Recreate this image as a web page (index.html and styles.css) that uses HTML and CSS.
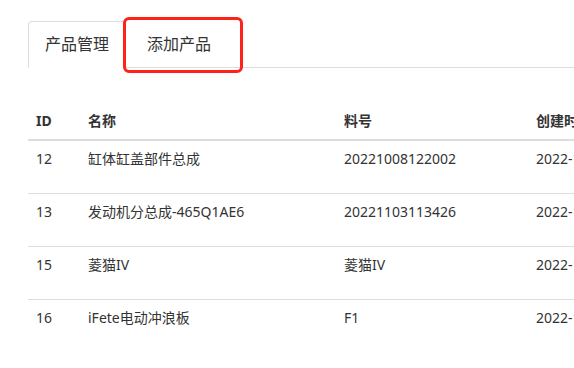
FILE: index.html
```html
<!DOCTYPE html>
<html lang="zh-CN">
<head>
    <meta charset="UTF-8">
    <meta name="viewport" content="width=device-width, initial-scale=1.0">
    <title>产品管理</title>
    <link rel="stylesheet" href="styles.css">
</head>
<body>
    <div class="page">
        <!-- Tabs -->
        <div class="tabs-wrap">
            <ul class="nav-tabs">
                <li class="tab active"><a href="#">产品管理</a></li>
                <li class="tab"><a href="#">添加产品</a></li>
            </ul>
            <div class="mark"></div>
        </div>

        <!-- Product table -->
        <table class="product-table">
            <colgroup>
                <col class="col-id">
                <col class="col-name">
                <col class="col-code">
                <col class="col-date">
            </colgroup>
            <thead>
                <tr>
                    <th>ID</th>
                    <th>名称</th>
                    <th>料号</th>
                    <th>创建时间</th>
                </tr>
            </thead>
            <tbody>
                <tr>
                    <td>12</td>
                    <td>缸体缸盖部件总成</td>
                    <td>20221008122002</td>
                    <td>2022-10-08</td>
                </tr>
                <tr>
                    <td>13</td>
                    <td>发动机分总成-465Q1AE6</td>
                    <td>20221103113426</td>
                    <td>2022-11-03</td>
                </tr>
                <tr>
                    <td>15</td>
                    <td>菱猫IV</td>
                    <td>菱猫IV</td>
                    <td>2022-11-10</td>
                </tr>
                <tr>
                    <td>16</td>
                    <td>iFete电动冲浪板</td>
                    <td>F1</td>
                    <td>2022-11-15</td>
                </tr>
            </tbody>
        </table>
    </div>
</body>
</html>
```

FILE: styles.css
```css
:root {
    --text: #333;
    --line: #ddd;
    --mark: #ff2219;
}

* {
    box-sizing: border-box;
    margin: 0;
    padding: 0;
}

body {
    font-family: 'Noto Sans', 'Noto Sans CJK SC', sans-serif;
    color: var(--text);
    background: #fff;
    overflow: hidden;
}

.page {
    padding: 21px 0 0 28px;
}

/* Tabs */
.tabs-wrap {
    position: relative;
}

.nav-tabs {
    list-style: none;
    display: flex;
    border-bottom: 1px solid var(--line);
}

.tab {
    margin-bottom: -1px;
    margin-right: 4px;
}

.tab a {
    display: block;
    padding: 12px 16px;
    font-size: 16px;
    line-height: 21px;
    color: var(--text);
    text-decoration: none;
    border: 1px solid transparent;
    border-radius: 4px 4px 0 0;
}

.tab.active a {
    border-color: var(--line);
    border-bottom-color: #fff;
    background: #fff;
}

.mark {
    position: absolute;
    left: 95px;
    top: -4px;
    width: 120px;
    height: 56px;
    border: 3px solid var(--mark);
    border-radius: 6px;
    pointer-events: none;
}

/* Table */
.product-table {
    margin-top: 35px;
    width: 900px;
    border-collapse: collapse;
    table-layout: fixed;
    font-size: 14px;
    line-height: 20px;
}

.col-id { width: 52px; }
.col-name { width: 256px; }
.col-code { width: 192px; }
.col-date { width: 400px; }

.product-table th {
    text-align: left;
    font-weight: 700;
    padding: 8px;
    border-bottom: 2px solid var(--line);
    white-space: nowrap;
}

.product-table td {
    padding: 8px 8px 24px;
    vertical-align: top;
    border-top: 1px solid var(--line);
    white-space: nowrap;
}

.product-table tbody tr:first-child td {
    border-top: none;
}
```
